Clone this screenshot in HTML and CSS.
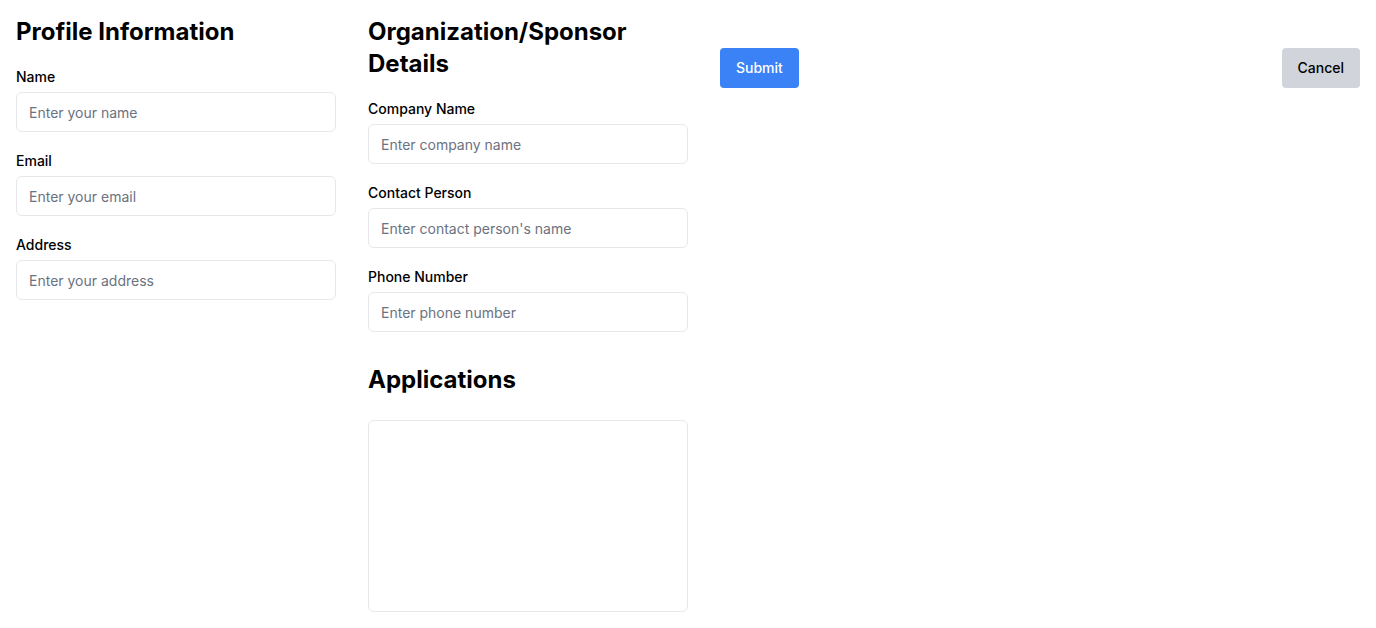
FILE: index.html
```html
<!DOCTYPE html>
<html lang="en">
<head>
<meta charset="utf-8">
<title>Profile</title>
<link rel="stylesheet" href="styles.css">
</head>
<body>
<div class="page">
  <section class="col">
    <h2 class="heading">Profile Information</h2>
    <div class="field">
      <label class="label">Name</label>
      <input class="input" type="text" placeholder="Enter your name">
    </div>
    <div class="field">
      <label class="label">Email</label>
      <input class="input" type="text" placeholder="Enter your email">
    </div>
    <div class="field">
      <label class="label">Address</label>
      <input class="input" type="text" placeholder="Enter your address">
    </div>
  </section>
  <section class="col">
    <h2 class="heading">Organization/Sponsor Details</h2>
    <div class="field">
      <label class="label">Company Name</label>
      <input class="input" type="text" placeholder="Enter company name">
    </div>
    <div class="field">
      <label class="label">Contact Person</label>
      <input class="input" type="text" placeholder="Enter contact person's name">
    </div>
    <div class="field">
      <label class="label">Phone Number</label>
      <input class="input" type="text" placeholder="Enter phone number">
    </div>
    <h2 class="heading apps-heading">Applications</h2>
    <div class="apps-box"></div>
  </section>
  <div class="actions">
    <button class="btn btn-primary">Submit</button>
    <button class="btn btn-secondary">Cancel</button>
  </div>
</div>
</body>
</html>
```
FILE: styles.css
```css
* { box-sizing: border-box; }
html, body { margin: 0; padding: 0; background: #ffffff; }
body {
  font-family: Inter, "Liberation Sans", sans-serif;
  color: #000000;
}
.page {
  display: flex;
  gap: 32px;
  padding: 16px;
  align-items: flex-start;
}
.col {
  width: 320px;
  flex: 0 0 320px;
  display: flex;
  flex-direction: column;
}
.heading {
  margin: 0 0 19px 0;
  font-size: 24px;
  line-height: 32px;
  font-weight: 700;
}
.field {
  display: flex;
  flex-direction: column;
}
.field + .field { margin-top: 19px; }
.label {
  font-size: 14px;
  line-height: 20px;
  font-weight: 500;
  margin-bottom: 5px;
}
.input {
  height: 40px;
  width: 100%;
  border: 1px solid #e5e7eb;
  border-radius: 6px;
  padding: 0 12px;
  font-family: inherit;
  font-size: 14px;
  color: #111827;
  background: #ffffff;
  outline: none;
}
.input::placeholder { color: #6b7280; }
.apps-heading { margin-top: 32px; margin-bottom: 24px; }
.apps-box {
  height: 192px;
  border: 1px solid #e5e7eb;
  border-radius: 6px;
}
.actions {
  flex: 1;
  display: flex;
  justify-content: space-between;
  margin-top: 32px;
}
.btn {
  height: 40px;
  padding: 0 16px;
  border: none;
  border-radius: 4px;
  font-family: inherit;
  font-size: 14px;
  line-height: 20px;
  font-weight: 500;
  cursor: pointer;
}
.btn-primary { background: #3b82f6; color: #ffffff; }
.btn-secondary { background: #d1d5db; color: #000000; }
```
